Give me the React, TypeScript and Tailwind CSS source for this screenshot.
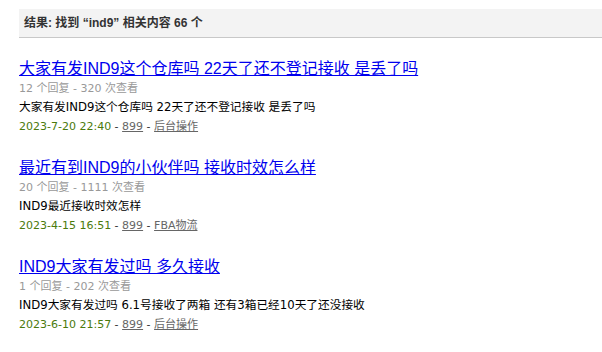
import React from "react";

interface Thread {
    title: string;
    replies: number;
    views: number;
    desc: string;
    date: string;
    user: string;
    forum: string;
}

const threads: Thread[] = [
    {
        title: "大家有发IND9这个仓库吗 22天了还不登记接收 是丢了吗",
        replies: 12,
        views: 320,
        desc: "大家有发IND9这个仓库吗 22天了还不登记接收 是丢了吗",
        date: "2023-7-20 22:40",
        user: "899",
        forum: "后台操作",
    },
    {
        title: "最近有到IND9的小伙伴吗 接收时效怎么样",
        replies: 20,
        views: 1111,
        desc: "IND9最近接收时效怎样",
        date: "2023-4-15 16:51",
        user: "899",
        forum: "FBA物流",
    },
    {
        title: "IND9大家有发过吗 多久接收",
        replies: 1,
        views: 202,
        desc: "IND9大家有发过吗 6.1号接收了两箱 还有3箱已经10天了还没接收",
        date: "2023-6-10 21:57",
        user: "899",
        forum: "后台操作",
    },
];

const small = { fontFamily: '"DejaVu Sans", "Noto Sans CJK SC", sans-serif' };
const big = { fontFamily: '"Liberation Sans", "Noto Sans CJK SC", sans-serif' };

export default function App() {
    return (
        <div className="w-[602px] h-[352px] bg-white pl-[19px] pt-[9px]" style={small}>
            <div className="h-[29px] bg-[#f3f3f3] border-b border-[#c8c8c8] flex items-center pl-[5px]">
                <h2 className="text-[12px] font-bold text-[#333]" style={big}>结果: 找到 “ind9” 相关内容 66 个</h2>
            </div>
            <ul className="pt-[21px]">
                {threads.map((t, i) => (
                    <li key={i} className="h-[99px]">
                        <h3 className="text-[16px] leading-[20px]" style={big}>
                            <a href="#" className="text-[#0000ee] underline">{t.title}</a>
                        </h3>
                        <p className="text-[11px] leading-[19px] text-[#999]">
                            {t.replies} 个回复 - {t.views} 次查看
                        </p>
                        <p className="text-[11.7px] leading-[19px] text-black">{t.desc}</p>
                        <p className="text-[11px] leading-[19px] text-[#333]">
                            <span className="text-[#4a7a0c]">{t.date}</span> -{" "}
                            <a href="#" className="text-[#666] underline">{t.user}</a> -{" "}
                            <a href="#" className="text-[#666] underline">{t.forum}</a>
                        </p>
                    </li>
                ))}
            </ul>
        </div>
    );
}
